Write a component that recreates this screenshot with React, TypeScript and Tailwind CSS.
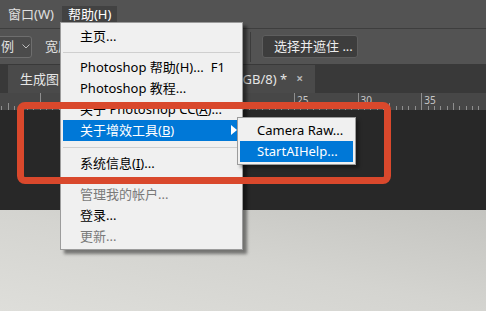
import React from "react";

const font = "font-['Noto_Sans','Noto_Sans_CJK_SC',sans-serif]";

const Ruler = () => {
  const ticks = [];
  for (let i = 0; i < 80; i++) {
    const x = -24 + i * 6.36;
    if (x > 486) break;
    const major = i % 10 === 0;
    const mid = i % 5 === 0;
    ticks.push(
      <line
        key={i}
        x1={Math.round(x) + 0.5}
        x2={Math.round(x) + 0.5}
        y1={major ? 0 : mid ? 10 : 13}
        y2={17}
        stroke="#8e8e8e"
        strokeWidth={1}
      />
    );
  }
  return (
    <svg width="486" height="17" className="block">
      {ticks}
      {[25, 30, 35].map((n) => (
        <text
          key={n}
          x={-24 + (n / 5) * 63.6 + 3}
          y={11}
          fontSize="10"
          fill="#c8c8c8"
          fontFamily="Noto Sans, sans-serif"
        >
          {n}
        </text>
      ))}
    </svg>
  );
};

const Item = ({
  label,
  right,
  gray,
  active,
}: {
  label: React.ReactNode;
  right?: string;
  gray?: boolean;
  active?: boolean;
}) => (
  <div
    className={`mx-[2px] h-[21px] flex items-center pl-[17px] pr-[15px] ${
      active ? "bg-[#0078d7] text-white" : gray ? "text-[#7a7a7a]" : "text-black"
    } relative`}
  >
    <span className="whitespace-nowrap">{label}</span>
    {right && <span className="ml-auto">{right}</span>}
    {active && (
      <svg width="6" height="10" viewBox="0 0 6 10" className="absolute right-[3px] top-[5px]">
        <path d="M0 0 L6 5 L0 10 Z" fill="#ffffff" />
      </svg>
    )}
  </div>
);

const Sep = ({ h }: { h: number }) => (
  <div className="flex items-center" style={{ height: h }}>
    <div className="mx-[2px] w-full h-px bg-[#cfcfcf]" />
  </div>
);

export default function App() {
  return (
    <div className={`relative w-[486px] h-[311px] overflow-hidden ${font} text-[13px] leading-none`}>
      {/* menu bar */}
      <div className="h-[28px] bg-[#535353] flex items-center text-[#e0e0e0]">
        <span className="ml-[8px]">窗口(W)</span>
        <span className="ml-[8px] h-[17px] mt-[1px] px-[6px] flex items-center bg-[#424242] text-white">帮助(H)</span>
      </div>

      {/* options bar */}
      <div className="h-[36px] bg-[#535353] border-t border-[#3e3e3e] flex items-center text-[#e0e0e0]">
        <div className="ml-[-4px] w-[36px] h-[22px] border border-[#6e6e6e] rounded-[3px] bg-[#4b4b4b] flex items-center pl-[4px] gap-[8px]">
          <span>例</span>
          <svg width="8" height="5" viewBox="0 0 8 5">
            <path d="M0.5 0.5 L4 4 L7.5 0.5" stroke="#bdbdbd" fill="none" />
          </svg>
        </div>
        <span className="ml-[13px]">宽度</span>
        <div className="ml-auto mr-[128px] flex items-center">
          <div className="w-px h-[30px] bg-[#3c3c3c] mr-[11px]" />
          <div className="w-[96px] h-[23px] rounded-[3px] bg-[#3d3d3d] border border-[#5e5e5e] flex items-center pl-[11px] text-[#ededed]">
            选择并遮住 ...
          </div>
        </div>
      </div>

      {/* tab bar */}
      <div className="h-[29px] bg-[#393939] flex items-end">
        <div className="ml-[8px] w-[307px] h-[28px] bg-[#4a4a4a] flex items-center pl-[12px] pr-[12px] text-[#e6e6e6]">
          <span className="whitespace-nowrap">生成图</span>
          <span className="ml-auto whitespace-nowrap">(RGB/8) *</span>
          <span className="ml-[9px] text-[#b5b5b5] text-[12px] font-bold">×</span>
        </div>
      </div>

      {/* ruler */}
      <div className="h-[17px] bg-[#474747]">
        <Ruler />
      </div>

      {/* dark canvas */}
      <div className="h-[100px] bg-[#282828]" />

      {/* document background */}
      <div className="h-[101px] bg-gradient-to-tr from-[#dededa] via-[#d4d4d0] to-[#c4c4c0]" />

      {/* help menu */}
      <div className="absolute left-[60px] top-[22px] w-[183px] h-[228px] bg-[#f0f0f0] border border-[#9c9c9c] shadow-[4px_4px_3px_rgba(0,0,0,0.45)] pt-[3px]">
        <Item label="主页..." />
        <Sep h={10} />
        <Item label="Photoshop 帮助(H)..." right="F1" />
        <Item label="Photoshop 教程..." />
        <Item label={<>关于 Photoshop CC(<u>A</u>)...</>} />
        <Item label={<>关于增效工具(<u>B</u>)</>} active />
        <Sep h={12} />
        <Item label={<>系统信息(<u>I</u>)...</>} />
        <Sep h={10} />
        <Item label="管理我的帐户..." gray />
        <Item label="登录..." />
        <Item label="更新..." gray />
      </div>

      {/* plug-ins submenu */}
      <div className="absolute left-[237px] top-[117px] w-[119px] h-[48px] bg-[#f0f0f0] border border-[#9c9c9c] shadow-[3px_3px_3px_rgba(0,0,0,0.35)] pt-[2px]">
        <div className="mx-[2px] h-[21px] flex items-center pl-[17px] text-black whitespace-nowrap">Camera Raw...</div>
        <div className="mx-[2px] h-[21px] flex items-center pl-[17px] bg-[#0078d7] text-white whitespace-nowrap">StartAIHelp...</div>
      </div>

      {/* annotation frame */}
      <div className="absolute left-[17px] top-[102px] w-[374px] h-[82px] border-[7px] border-[#d9482c] rounded-[8px]" />
    </div>
  );
}
